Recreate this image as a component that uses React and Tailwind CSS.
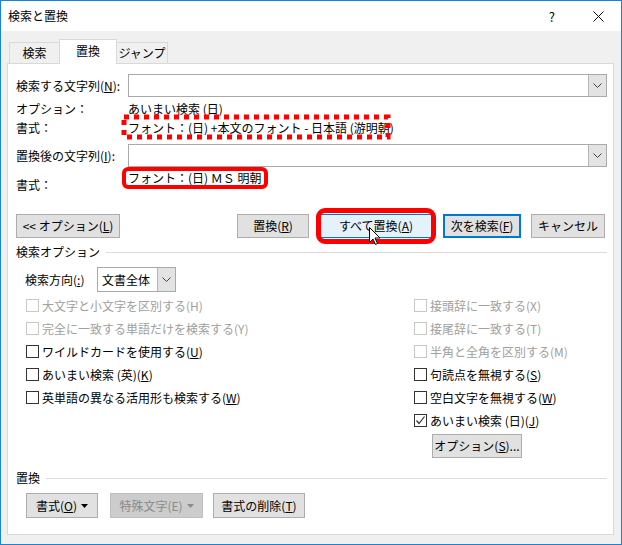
import React from "react";

function Chevron() {
  return (
    <svg width="9" height="5" viewBox="0 0 9 5" fill="none">
      <polyline points="0.5,0.5 4.5,4.5 8.5,0.5" stroke="#404040" strokeWidth="1" />
    </svg>
  );
}

function Combo({ children, className = "" }) {
  return (
    <div className={`h-full flex border border-[#a9a9a9] bg-white ${className}`}>
      <div className="flex-1 flex items-center pl-[4px]">{children}</div>
      <div className="w-[18px] flex items-center justify-center bg-[#e3e3e3] border-l border-[#b5b5b5]">
        <Chevron />
      </div>
    </div>
  );
}

function Box({ checked, disabled }) {
  return (
    <span
      className={`w-[13px] h-[13px] shrink-0 border bg-white flex items-center justify-center ${
        disabled ? "border-[#c8c8c8]" : "border-[#333333]"
      }`}
    >
      {checked ? (
        <svg width="11" height="11" viewBox="0 0 11 11" fill="none">
          <polyline points="1.5,5.5 4,8.5 9.5,1.5" stroke="#333" strokeWidth="1.2" />
        </svg>
      ) : null}
    </span>
  );
}

function Check({ children, checked, disabled }) {
  return (
    <div className={`h-[23px] flex items-center gap-[3px] ${disabled ? "text-[#a0a0a0]" : "text-black"}`}>
      <Box checked={checked} disabled={disabled} />
      <span className="leading-none whitespace-nowrap">{children}</span>
    </div>
  );
}

function Btn({ children, className = "" }) {
  return (
    <div
      className={`h-full flex items-center justify-center border border-[#adadad] bg-[#e1e1e1] whitespace-nowrap ${className}`}
    >
      {children}
    </div>
  );
}

function Section({ title }) {
  return (
    <div className="h-[16px] flex items-center gap-[6px] pl-[8px]">
      <span className="leading-none whitespace-nowrap">{title}</span>
      <div className="flex-1 h-px bg-[#dcdcdc]" />
    </div>
  );
}

export default function App() {
  return (
    <div className="w-[622px] h-[545px] border border-[#1883d7] flex flex-col font-['Noto_Sans_CJK_JP',sans-serif] text-[12px] text-black bg-[#f0f0f0] overflow-hidden">
      {/* title bar */}
      <div className="h-[30px] shrink-0 bg-white flex items-center pl-[7px]">
        <span className="leading-none">検索と置換</span>
        <div className="flex-1" />
        <span className="leading-none text-[13px] mr-[38px]">?</span>
        <svg width="11" height="11" viewBox="0 0 11 11" className="mr-[17px]">
          <line x1="0.5" y1="0.5" x2="10.5" y2="10.5" stroke="#111" strokeWidth="1" />
          <line x1="10.5" y1="0.5" x2="0.5" y2="10.5" stroke="#111" strokeWidth="1" />
        </svg>
      </div>

      <div className="flex-1 pt-[8px] pl-[6px] pr-[7px]">
        {/* tabs */}
        <div className="h-[24px] flex items-end pl-[2px]">
          <div className="w-[51px] h-[21px] border border-b-0 border-[#d9d9d9] flex items-center justify-center">検索</div>
          <div className="w-[58px] h-[25px] -ml-px -mb-px relative z-10 bg-white border border-b-0 border-[#d9d9d9] flex items-center justify-center pb-[3px]">
            置換
          </div>
          <div className="w-[52px] h-[21px] -ml-px border border-b-0 border-[#d9d9d9] flex items-center justify-center">ジャンプ</div>
        </div>

        {/* panel */}
        <div className="h-[472px] border border-[#d9d9d9] bg-white flex flex-col pr-[6px]">
          <div className="mt-[10px] h-[23px] flex items-center pl-[8px]">
            <span className="w-[112px] leading-none">
              検索する文字列(<u>N</u>):
            </span>
            <Combo className="flex-1" />
          </div>

          <div className="mt-[4px] h-[16px] flex items-center pl-[8px]">
            <span className="w-[112px] leading-none">オプション：</span>
            <span className="leading-none">あいまい検索 (日)</span>
          </div>

          <div className="mt-[2px] h-[18px] flex items-center pl-[8px]">
            <span className="w-[112px] leading-none">書式：</span>
            <div className="relative">
              <span className="leading-none whitespace-nowrap">フォント：(日) +本文のフォント - 日本語 (游明朝)</span>
              <svg width="270" height="26" className="absolute left-[-7px] top-[-5px]" viewBox="0 0 270 26" fill="none">
                <rect x="3" y="3" width="264" height="20" stroke="#ff0000" strokeWidth="5" strokeDasharray="5 5" />
              </svg>
            </div>
          </div>

          <div className="mt-[7px] h-[23px] flex items-center pl-[8px]">
            <span className="w-[112px] leading-none">
              置換後の文字列(<u>I</u>):
            </span>
            <Combo className="flex-1" />
          </div>

          <div className="h-[26px] flex pl-[8px]">
            <span className="w-[112px] self-end h-[16px] flex items-center leading-none">書式：</span>
            <div className="relative h-[16px] mt-[3px] flex items-center">
              <span className="leading-none whitespace-nowrap">フォント：(日) ＭＳ 明朝</span>
              <div className="absolute left-[-6px] top-[-3px] w-[146px] h-[22px] border-[4px] border-[#ff0000] rounded-[6px]" />
            </div>
          </div>

          {/* main buttons */}
          <div className="mt-[21px] h-[24px] flex pl-[8px]">
            <Btn className="w-[104px]">
              {"<< オプション("}
              <u>L</u>)
            </Btn>
            <Btn className="w-[72px] ml-[117px]">
              置換(<u>R</u>)
            </Btn>
            <div className="relative w-[114px] ml-[10px] h-full">
              <Btn className="w-full !bg-[#e5f1fb] !border-[#0078d7]">
                すべて置換(<u>A</u>)
              </Btn>
              <div className="absolute left-[-3px] top-[-6px] w-[120px] h-[36px] border-[5px] border-[#ff0000] rounded-[9px]" />
              <svg width="13" height="19" viewBox="0 0 13 19" className="absolute left-[50px] top-[13px]">
                <path d="M0.5 0.5 L0.5 15.5 L4 12 L6.5 17.5 L8.5 16.5 L6 11 L11 11 Z" fill="#fff" stroke="#000" strokeWidth="1" />
              </svg>
            </div>
            <Btn className="w-[78px] ml-[10px] !border-2 !border-[#0078d7]">
              次を検索(<u>F</u>)
            </Btn>
            <Btn className="w-[74px] ml-[10px]">キャンセル</Btn>
          </div>

          <div className="mt-[6px]">
            <Section title="検索オプション" />
          </div>

          <div className="mt-[7px] h-[25px] flex items-center pl-[17px]">
            <span className="w-[72px] leading-none">
              検索方向(<u>:</u>)
            </span>
            <Combo className="w-[79px]">
              <span className="leading-none">文書全体</span>
            </Combo>
          </div>

          <div className="mt-[2px] flex pl-[18px]">
            <div className="w-[388px] flex flex-col">
              <Check disabled>大文字と小文字を区別する(H)</Check>
              <Check disabled>完全に一致する単語だけを検索する(Y)</Check>
              <Check>
                ワイルドカードを使用する(<u>U</u>)
              </Check>
              <Check>
                あいまい検索 (英)(<u>K</u>)
              </Check>
              <Check>
                英単語の異なる活用形も検索する(<u>W</u>)
              </Check>
            </div>
            <div className="flex flex-col">
              <Check disabled>接頭辞に一致する(X)</Check>
              <Check disabled>接尾辞に一致する(T)</Check>
              <Check disabled>半角と全角を区別する(M)</Check>
              <Check>
                句読点を無視する(<u>S</u>)
              </Check>
              <Check>
                空白文字を無視する(<u>W</u>)
              </Check>
              <Check checked>
                あいまい検索 (日)(<u>J</u>)
              </Check>
              <div className="mt-[2px] ml-[18px] h-[24px]">
                <Btn className="w-[90px]">
                  オプション(<u>S</u>)...
                </Btn>
              </div>
            </div>
          </div>

          <div className="mt-[12px]">
            <Section title="置換" />
          </div>

          <div className="mt-[7px] h-[25px] flex pl-[18px] gap-[12px]">
            <Btn className="w-[72px] gap-[4px]">
              <span>
                書式(<u>O</u>)
              </span>
              <svg width="7" height="4" viewBox="0 0 7 4">
                <polygon points="0,0 7,0 3.5,4" fill="#000" />
              </svg>
            </Btn>
            <Btn className="w-[93px] gap-[4px] !bg-[#cccccc] !border-[#bfbfbf] text-[#8a8a8a]">
              <span>特殊文字(E)</span>
              <svg width="7" height="4" viewBox="0 0 7 4">
                <polygon points="0,0 7,0 3.5,4" fill="#8a8a8a" />
              </svg>
            </Btn>
            <Btn className="w-[92px] -ml-[2px]">
              書式の削除(<u>T</u>)
            </Btn>
          </div>
        </div>
      </div>
    </div>
  );
}
